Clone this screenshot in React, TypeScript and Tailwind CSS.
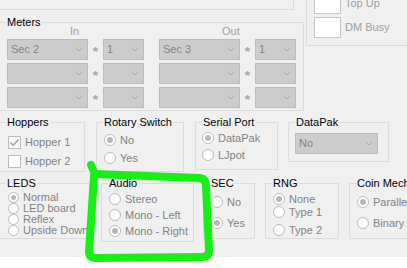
import type { ReactNode } from 'react'

function Group({ title, className, children }: { title: string; className?: string; children?: ReactNode }) {
  return (
    <fieldset className={`shrink-0 border border-[#dcdcdc] ${className ?? ''}`}>
      <legend className="ml-[6px] px-[1px] text-[11px] leading-[13px] text-black">{title}</legend>
      {children}
    </fieldset>
  )
}

function Radio({ label, checked = false, small = false, className = '' }: { label: string; checked?: boolean; small?: boolean; className?: string }) {
  return (
    <div className={`flex items-center gap-[4px] ${small ? 'h-[11px] leading-[11px]' : 'h-[12px] leading-[12px]'} ${className}`}>
      <span
        className={`flex shrink-0 items-center justify-center rounded-full border border-[#bcbcbc] bg-white ${small ? 'h-[11px] w-[11px]' : 'h-[12px] w-[12px]'}`}
      >
        {checked && <span className={`rounded-full bg-[#b8b8b8] ${small ? 'h-[5px] w-[5px]' : 'h-[6px] w-[6px]'}`} />}
      </span>
      <span className="whitespace-nowrap text-[#838383]">{label}</span>
    </div>
  )
}

function Check({ label, checked = false, className = '' }: { label: string; checked?: boolean; className?: string }) {
  return (
    <div className={`flex h-[13px] items-center gap-[4px] leading-[13px] ${className}`}>
      <span className={`flex h-[13px] w-[13px] shrink-0 items-center justify-center border border-[#bcbcbc] ${checked ? 'bg-[#f6f6f6]' : 'bg-white'}`}>
        {checked && (
          <svg width="11" height="11" viewBox="0 0 11 11">
            <polyline points="1.5,5.5 4.2,8.2 9.5,2.5" fill="none" stroke="#a4a4a4" strokeWidth="1.5" />
          </svg>
        )}
      </span>
      <span className="whitespace-nowrap text-[#838383]">{label}</span>
    </div>
  )
}

function Combo({ value = '', className = '' }: { value?: string; className?: string }) {
  return (
    <div className={`flex h-[21px] shrink-0 items-center justify-between border border-[#bcbcbc] bg-[#cccccc] pl-[3px] pr-[4px] ${className}`}>
      <span className="leading-[13px] text-[#838383]">{value}</span>
      <svg width="8" height="5" viewBox="0 0 8 5">
        <polyline points="0.5,0.5 4,4 7.5,0.5" fill="none" stroke="#a8a8a8" strokeWidth="1" />
      </svg>
    </div>
  )
}

function Star() {
  return <span className="w-[15px] shrink-0 pt-[3px] text-center text-[13px] font-bold leading-[13px] text-[#a4a4a4]">*</span>
}

const meterRows = [
  { a: 'Sec 2', b: '1', c: 'Sec 3', d: '1' },
  { a: '', b: '', c: '', d: '' },
  { a: '', b: '', c: '', d: '' },
]

export default function App() {
  return (
    <div className="relative h-[268px] w-[407px] overflow-hidden bg-white font-['Liberation_Sans',Arial,sans-serif] text-[11px]">
      <div className="h-[257px] bg-[#f0f0f0]">
        {/* top: meters + indicators */}
        <div className="flex items-start">
          <div className="ml-[-1px] w-[305px] shrink-0">
            <div className="mt-[-10px] h-[20px] w-[295px] border border-[#dcdcdc]" />
            <Group title="Meters" className="mt-[6px] h-[95px] w-[305px]">
              <div className="mt-[-3px] flex h-[10px] leading-[10px] text-[#a0a0a0]">
                <span className="ml-[70px] w-[152px]">In</span>
                <span>Out</span>
              </div>
              <div className="mt-[3px] flex flex-col gap-[3px] pl-[7px]">
                {meterRows.map((r, i) => (
                  <div key={i} className="flex items-center">
                    <Combo value={r.a} className="w-[81px]" />
                    <Star />
                    <Combo value={r.b} className="w-[41px]" />
                    <Combo value={r.c} className="ml-[15px] w-[81px]" />
                    <Star />
                    <Combo value={r.d} className="w-[41px]" />
                  </div>
                ))}
              </div>
            </Group>
          </div>
          <div className="ml-[2px] mt-[-10px] h-[56px] w-[110px] shrink-0 border border-[#dcdcdc] pl-[7px] pt-[2px]">
            <div className="flex flex-col gap-[3px]">
              <div className="flex items-center gap-[4px]">
                <span className="h-[21px] w-[27px] border border-[#c4c4c4] bg-white" />
                <span className="whitespace-nowrap text-[#a0a0a0]">Top Up</span>
              </div>
              <div className="flex items-center gap-[4px]">
                <span className="h-[21px] w-[27px] border border-[#c4c4c4] bg-white" />
                <span className="whitespace-nowrap text-[#a0a0a0]">DM Busy</span>
              </div>
            </div>
          </div>
        </div>

        {/* middle row */}
        <div className="mt-[5px] flex items-start">
          <Group title="Hoppers" className="ml-[-1px] h-[56px] w-[86px]">
            <Check label="Hopper 1" checked className="ml-[8px] mt-[7px]" />
            <Check label="Hopper 2" className="ml-[8px] mt-[6px]" />
          </Group>
          <Group title="Rotary Switch" className="ml-[11px] h-[56px] w-[88px]">
            <Radio label="No" checked className="ml-[7px] mt-[5px]" />
            <Radio label="Yes" className="ml-[7px] mt-[6px]" />
          </Group>
          <Group title="Serial Port" className="ml-[11px] h-[54px] w-[83px]">
            <Radio label="DataPak" checked className="ml-[6px] mt-[3px]" />
            <Radio label="LJpot" className="ml-[6px] mt-[5px]" />
          </Group>
          <Group title="DataPak" className="ml-[10px] h-[46px] w-[101px]">
            <Combo value="No" className="ml-[6px] mt-[4px] w-[83px]" />
          </Group>
        </div>

        {/* bottom row */}
        <div className="mt-[5px] flex items-start">
          <Group title="LEDS" className="ml-[-1px] h-[62px] w-[92px]">
            <div className="ml-[8px] mt-[2px] flex flex-col">
              <Radio small checked label="Normal" />
              <Radio small label="LED board" />
              <Radio small label="Reflex" />
              <Radio small label="Upside Down" />
            </div>
          </Group>
          <Group title="Audio" className="ml-[10px] h-[65px] w-[93px]">
            <div className="ml-[7px] mt-[3px] flex flex-col gap-[4px]">
              <Radio label="Stereo" />
              <Radio label="Mono - Left" />
              <Radio label="Mono - Right" checked />
            </div>
          </Group>
          <Group title="SEC" className="ml-[9px] h-[62px] w-[52px]">
            <div className="ml-[7px] mt-[6px] flex flex-col gap-[9px]">
              <Radio label="No" />
              <Radio label="Yes" checked />
            </div>
          </Group>
          <Group title="RNG" className="ml-[10px] h-[62px] w-[74px]">
            <Radio label="None" checked className="ml-[7px] mt-[3px]" />
            <Radio label="Type 1" className="ml-[7px] mt-[1px]" />
            <Radio label="Type 2" className="ml-[7px] mt-[6px]" />
          </Group>
          <Group title="Coin Mech" className="ml-[10px] h-[62px] w-[70px]">
            <div className="ml-[7px] mt-[6px] flex flex-col gap-[9px]">
              <Radio label="Parallel" checked />
              <Radio label="Binary" />
            </div>
          </Group>
        </div>
      </div>

      {/* hand-drawn highlight around Audio */}
      <svg className="pointer-events-none absolute left-0 top-0" width="407" height="268" viewBox="0 0 407 268">
        <path
          d="M91 165 L95 174 L200 178 Q206 179 206 186 L209 250 Q209 257 202 257 L95 258 Q89 258 89 252 L94 176"
          fill="none"
          stroke="#17f017"
          strokeWidth="8"
          strokeLinecap="round"
          strokeLinejoin="round"
        />
      </svg>
    </div>
  )
}
